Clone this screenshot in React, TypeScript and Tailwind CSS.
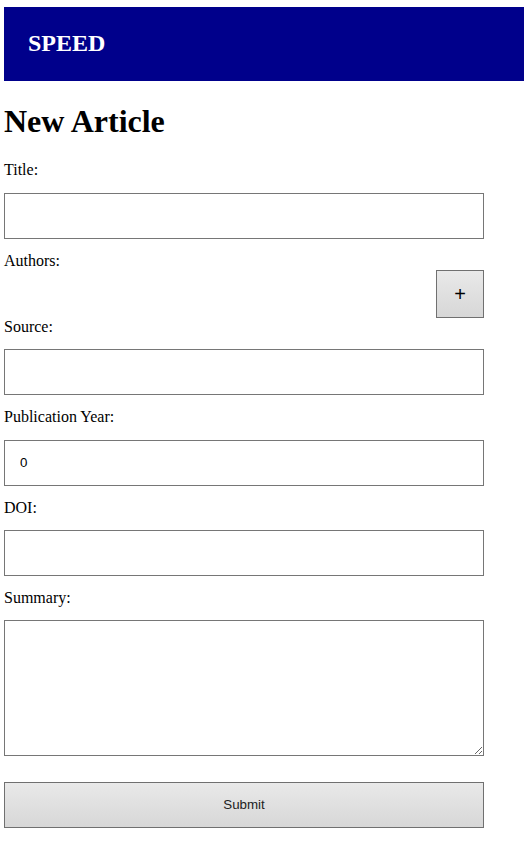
import React from "react";

function Label({ children }: { children: React.ReactNode }) {
  return (
    <label className="block font-['Liberation_Serif','Times_New_Roman',serif] text-[16px] leading-[1.15] text-black">
      {children}
    </label>
  );
}

const inputCls =
  "block w-[480px] h-[46px] my-[13px] border border-[#767676] bg-white px-[15px] font-['Liberation_Sans',Arial,sans-serif] text-[13.33px] text-black outline-none";

export default function App() {
  return (
    <div className="min-h-[849px] bg-white font-['Liberation_Serif','Times_New_Roman',serif]">
      <div className="pt-[7px] pl-[4px]">
        <header className="flex h-[74px] w-[520px] items-center bg-[#00008b] pl-[24px]">
          <span className="text-[24px] font-bold leading-[1.15] text-white">SPEED</span>
        </header>
      </div>
      <main className="pl-[4px]">
        <h1 className="mt-[21.9px] mb-[21.44px] text-[32px] font-bold leading-[1.15] text-black">New Article</h1>
        <form className="flex flex-col" onSubmit={(e) => e.preventDefault()}>
          <Label>Title:</Label>
          <input type="text" className={inputCls} />
          <Label>Authors:</Label>
          <div className="flex w-[480px] justify-end">
            <button
              type="button"
              className="flex h-[48px] w-[48px] items-center justify-center border border-[#707070] bg-gradient-to-b from-[#e9e9e9] to-[#d7d7d7] font-['Liberation_Sans',Arial,sans-serif] text-[20px] leading-none text-black"
            >
              +
            </button>
          </div>
          <Label>Source:</Label>
          <input type="text" className={inputCls} />
          <Label>Publication Year:</Label>
          <input type="number" defaultValue={0} className={inputCls} />
          <Label>DOI:</Label>
          <input type="text" className={inputCls} />
          <Label>Summary:</Label>
          <textarea className="block h-[136px] w-[480px] my-[13px] resize border border-[#767676] bg-white px-[15px] py-[10px] font-['Liberation_Sans',Arial,sans-serif] text-[13.33px] text-black outline-none" />
          <button
            type="submit"
            className="mt-[13px] block h-[46px] w-[480px] border border-[#707070] bg-gradient-to-b from-[#e9e9e9] to-[#d7d7d7] font-['Liberation_Sans',Arial,sans-serif] text-[13.33px] text-[#222]"
          >
            Submit
          </button>
        </form>
      </main>
    </div>
  );
}
